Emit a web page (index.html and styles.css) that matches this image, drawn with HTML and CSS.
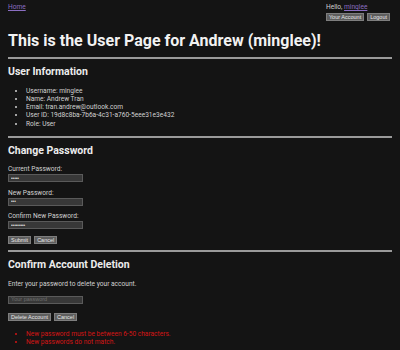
FILE: index.html
```html
<!DOCTYPE html>
<html>
<head>
<meta charset="utf-8">
<link rel="stylesheet" href="styles.css">
</head>
<body>
<header class="topbar">
  <a class="link home" href="#">Home</a>
  <div class="account">
    <div class="hello">Hello, <a class="link" href="#">minglee</a></div>
    <div class="btn-row">
      <button class="btn" type="button">Your Account</button>
      <button class="btn" type="button">Logout</button>
    </div>
  </div>
</header>
<h1 class="title">This is the User Page for Andrew (minglee)!</h1>
<hr class="rule">
<h2 class="section">User Information</h2>
<ul class="info">
  <li>Username: minglee</li>
  <li>Name: Andrew Tran</li>
  <li>Email: tran.andrew@outlook.com</li>
  <li>User ID: 19d8c8ba-7b6a-4c31-a760-5eee31e3e432</li>
  <li>Role: User</li>
</ul>
<hr class="rule">
<h2 class="section">Change Password</h2>
<form class="form">
  <label class="field"><span class="label">Current Password:</span><input class="input" type="password" value="abcde"></label>
  <label class="field"><span class="label">New Password:</span><input class="input" type="password" value="abc"></label>
  <label class="field"><span class="label">Confirm New Password:</span><input class="input" type="password" value="abcdefghi"></label>
  <div class="btn-row form-btns">
    <button class="btn" type="button">Submit</button>
    <button class="btn" type="button">Cancel</button>
  </div>
</form>
<hr class="rule rule-del">
<h2 class="section">Confirm Account Deletion</h2>
<p class="note">Enter your password to delete your account.</p>
<input class="input solo" type="password" placeholder="Your password">
<div class="btn-row del-btns">
  <button class="btn" type="button">Delete Account</button>
  <button class="btn" type="button">Cancel</button>
</div>
<ul class="errors">
  <li>New password must be between 6-50 characters.</li>
  <li>New passwords do not match.</li>
</ul>
</body>
</html>
```
FILE: styles.css
```css
html, body {
  background: #141414;
}
body {
  margin: 0;
  padding: 0 8px;
  font-family: Roboto, "Liberation Sans", sans-serif;
  font-size: 6.6px;
  color: #d2d2d2;
}
.topbar {
  display: flex;
  justify-content: space-between;
  align-items: flex-start;
  padding-top: 2px;
}
.link {
  color: #8b6ec2;
  text-decoration: underline;
}
.home {
  line-height: 10px;
}
.account {
  display: flex;
  flex-direction: column;
  margin-right: 2px;
}
.hello {
  line-height: 10px;
  margin-bottom: 1px;
}
.btn-row {
  display: flex;
  gap: 3px;
}
.btn {
  font-family: "Liberation Sans", Arial, sans-serif;
  font-size: 5.5px;
  color: #e6e6e6;
  background: #5e5e5e;
  border: 1px solid #7e7e7e;
  border-radius: 0;
  padding: 0 2px;
  height: 8px;
  line-height: 6px;
  margin: 0;
}
.title {
  font-size: 16px;
  font-weight: bold;
  color: #f2f2f2;
  line-height: 18px;
  margin: 11px 0 7px;
}
.rule {
  height: 0;
  border: 0;
  border-top: 2px solid #9a9a9a;
  margin: 0;
}
.section {
  font-size: 10.5px;
  font-weight: bold;
  color: #ececec;
  line-height: 12px;
  margin: 7px 0 0;
}
.info {
  margin: 8.5px 0 8.4px;
  padding-left: 18px;
  line-height: 8.25px;
}
.form {
  margin: 8px 0 0;
}
.field {
  display: flex;
  flex-direction: column;
  margin-bottom: 6.5px;
}
.label {
  line-height: 9px;
}
.input {
  display: block;
  width: 75px;
  height: 8px;
  box-sizing: border-box;
  background: #383838;
  border: 1px solid #5a5a5a;
  color: #e0e0e0;
  font-size: 4.5px;
  padding: 0 2px;
  margin: 0;
  outline: none;
}
.input::placeholder {
  color: #6e6e6e;
  font-family: "Liberation Sans", Arial, sans-serif;
  font-size: 5.5px;
}
.form-btns {
  margin-top: 1.5px;
}
.rule-del {
  margin-top: 6px;
}
.note {
  line-height: 9px;
  margin: 9px 0 0;
}
.solo {
  margin-top: 7px;
}
.del-btns {
  margin-top: 9px;
}
.errors {
  margin: 9px 0 0;
  padding-left: 18px;
  line-height: 8.3px;
  color: #d41414;
}
```
